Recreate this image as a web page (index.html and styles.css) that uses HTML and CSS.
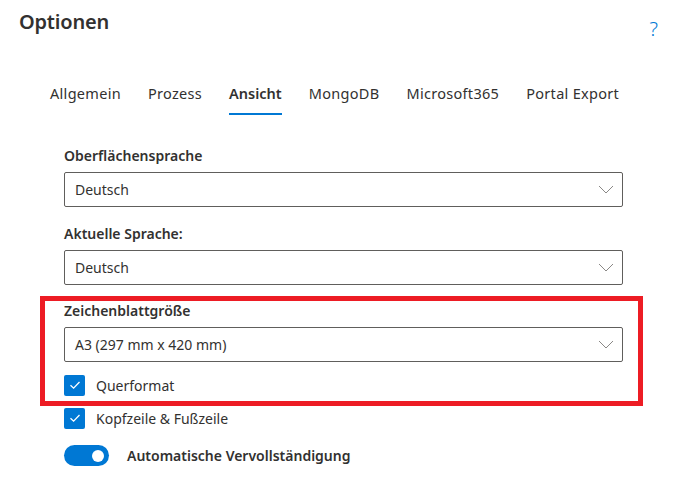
FILE: index.html
```html
<!DOCTYPE html>
<html lang="de">
<head>
<meta charset="utf-8">
<title>Optionen</title>
<link rel="stylesheet" href="styles.css">
</head>
<body>
<div class="dialog">
  <header class="header">
    <h1 class="title">Optionen</h1>
    <span class="help">?</span>
  </header>
  <nav class="tabs">
    <span class="tab">Allgemein</span>
    <span class="tab">Prozess</span>
    <span class="tab active">Ansicht</span>
    <span class="tab">MongoDB</span>
    <span class="tab">Microsoft365</span>
    <span class="tab">Portal Export</span>
  </nav>
  <div class="form">
    <div class="field">
      <label class="label">Oberflächensprache</label>
      <div class="select"><span>Deutsch</span><svg class="chev" width="16" height="9" viewBox="0 0 16 9"><path d="M1 1 L8 8 L15 1" fill="none" stroke="#8a8886" stroke-width="1"/></svg></div>
    </div>
    <div class="field">
      <label class="label">Aktuelle Sprache:</label>
      <div class="select"><span>Deutsch</span><svg class="chev" width="16" height="9" viewBox="0 0 16 9"><path d="M1 1 L8 8 L15 1" fill="none" stroke="#8a8886" stroke-width="1"/></svg></div>
    </div>
    <div class="highlight">
      <div class="field tight">
        <label class="label">Zeichenblattgröße</label>
        <div class="select"><span>A3 (297 mm x 420 mm)</span><svg class="chev" width="16" height="9" viewBox="0 0 16 9"><path d="M1 1 L8 8 L15 1" fill="none" stroke="#8a8886" stroke-width="1"/></svg></div>
      </div>
      <div class="check">
        <span class="box"><svg width="14" height="14" viewBox="0 0 14 14"><path d="M2.5 7.2 L5.6 10.2 L11.5 4" fill="none" stroke="#fff" stroke-width="1.3"/></svg></span>
        <span class="check-text">Querformat</span>
      </div>
    </div>
    <div class="check second">
      <span class="box"><svg width="14" height="14" viewBox="0 0 14 14"><path d="M2.5 7.2 L5.6 10.2 L11.5 4" fill="none" stroke="#fff" stroke-width="1.3"/></svg></span>
      <span class="check-text">Kopfzeile &amp; Fußzeile</span>
    </div>
    <div class="toggle-row">
      <span class="toggle"><span class="knob"></span></span>
      <span class="toggle-text">Automatische Vervollständigung</span>
    </div>
  </div>
</div>
</body>
</html>
```
FILE: styles.css
```css
html, body {
  margin: 0;
  padding: 0;
  background: #ffffff;
}
body {
  font-family: "Noto Sans", "DejaVu Sans", sans-serif;
  color: #323130;
  width: 678px;
  height: 482px;
  overflow: hidden;
}
.header {
  display: flex;
  justify-content: space-between;
  align-items: flex-start;
  padding: 7px 20px 0 19px;
  height: 66px;
  box-sizing: border-box;
}
.title {
  margin: 0;
  font-size: 20px;
  font-weight: 600;
  line-height: 30px;
  color: #323130;
  letter-spacing: -0.2px;
}
.help {
  font-size: 20px;
  line-height: 20px;
  color: #0078d4;
  margin-top: 12px;
  font-weight: 300;
}
.tabs {
  display: flex;
  gap: 27px;
  padding-left: 50px;
  height: 54px;
  box-sizing: border-box;
  padding-top: 17px;
}
.tab {
  font-size: 14.5px;
  line-height: 20px;
  color: #323130;
  height: 33px;
  box-sizing: border-box;
  letter-spacing: 0.3px;
}
.tab.active {
  font-weight: 600;
  letter-spacing: 0;
  border-bottom: 2px solid #0078d4;
  height: 32px;
}
.form {
  width: 559px;
  margin-left: 64px;
  padding-top: 26px;
}
.field {
  display: flex;
  flex-direction: column;
  margin-bottom: 17px;
}
.field.tight {
  margin-bottom: 12px;
}
.label {
  font-size: 14px;
  font-weight: 600;
  line-height: 20px;
  margin-bottom: 6px;
}
.select {
  height: 35px;
  box-sizing: border-box;
  border: 1px solid #605e5c;
  border-radius: 2px;
  display: flex;
  align-items: center;
  justify-content: space-between;
  padding: 0 8px 0 10px;
  font-size: 14px;
}
.chev {
  display: block;
}
.highlight {
  margin: -6px -20px 0 -24px;
  padding: 0 15px 5px 19px;
  border: 5px solid #ed1c24;
}
.check {
  display: flex;
  align-items: center;
  gap: 11px;
  height: 22px;
}
.check.second {
  margin-top: 1px;
}
.box {
  width: 21px;
  height: 21px;
  background: #0078d4;
  border-radius: 2px;
  display: flex;
  align-items: center;
  justify-content: center;
}
.check-text {
  font-size: 14px;
}
.toggle-row {
  display: flex;
  align-items: center;
  gap: 18px;
  margin-top: 16px;
}
.toggle {
  width: 45px;
  height: 21px;
  border-radius: 11px;
  background: #0078d4;
  display: flex;
  align-items: center;
  justify-content: flex-end;
  padding-right: 5px;
  box-sizing: border-box;
}
.knob {
  width: 12px;
  height: 12px;
  border-radius: 50%;
  background: #fff;
}
.toggle-text {
  font-size: 14px;
  font-weight: 600;
}
```
